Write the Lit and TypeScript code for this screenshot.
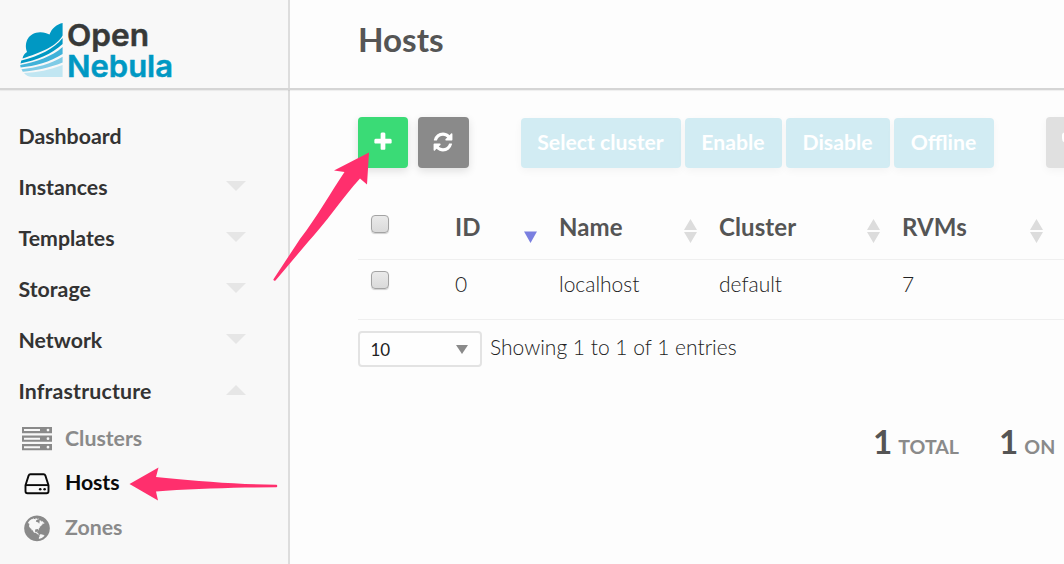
import { LitElement, html, css, svg } from "lit";
import { customElement, property } from "lit/decorators.js";

const PLUS = "M1600 736v192q0 40-28 68t-68 28h-416v416q0 40-28 68t-68 28h-192q-40 0-68-28t-28-68v-416h-416q-40 0-68-28t-28-68v-192q0-40 28-68t68-28h416v-416q0-40 28-68t68-28h192q40 0 68 28t28 68v416h416q40 0 68 28t28 68z";
const REFRESH = "M1639 1056q0 5-1 7-64 268-268 434.5t-478 166.5q-146 0-282.5-55t-243.5-157l-129 129q-19 19-45 19t-45-19-19-45v-448q0-26 19-45t45-19h448q26 0 45 19t19 45-19 45l-137 137q71 66 161 102t187 36q134 0 250-65t186-179q11-17 53-117 8-23 30-23h192q13 0 22.5 9.5t9.5 22.5zm25-800v448q0 26-19 45t-45 19h-448q-26 0-45-19t-19-45 19-45l138-138q-148-137-349-137-134 0-250 65t-186 179q-11 17-53 117-8 23-30 23h-199q-13 0-22.5-9.5t-9.5-22.5v-7q65-268 270-434.5t480-166.5q146 0 284 55.5t245 156.5l130-129q19-19 45-19t45 19 19 45z";
const GLOBE = "M896 128q209 0 385.5 103t279.5 279.5 103 385.5-103 385.5-279.5 279.5-385.5 103-385.5-103-279.5-279.5-103-385.5 103-385.5 279.5-279.5 385.5-103zm274 521q-2 1-9.5 9.5t-13.5 9.5q2 0 4.5-5t5-11 3.5-7q6-7 22-15 14-6 52-12 34-8 51 11-2-2 9.5-13t14.5-12q3-2 15-4.5t15-7.5l2-22q-12 1-17.5-7t-6.5-21q0 2-6 8 0-7-4.5-8t-11.5 1-9 1q-10-3-15-7.5t-8-16.5-4-15q-2-5-9.5-11t-9.5-10q-1-2-2.5-5.5t-3-6.5-4-5.5-5.5-2.5-7 5-7.5 10-4.5 5q-3-2-6-1.5t-4.5 1-4.5 3-5 3.5q-3 2-8.5 3t-8.5 2q15-5-1-11-10-4-16-3 9-4 7.5-12t-8.5-14h5q-1-4-8.5-8.5t-17.5-8.5-13-6q-8-5-34-9.5t-33-.5q-5 6-4.5 10.5t4 14 3.5 12.5q1 6-5.5 13t-6.5 12q0 7 14 15.5t10 21.5q-3 8-16 16t-16 12q-5 8-1.5 18.5t10.5 16.5q2 2 1.5 4t-3.5 4.5-5.5 4-6.5 3.5l-3 2q-11 5-20.5-6t-13.5-26q-7-25-16-30-23-8-29 1-5-13-41-26-25-9-58-4 6-1 0-15-7-15-19-12 3-6 4-17.5t1-13.5q3-13 12-23 1-1 7-8.5t9.5-13.5.5-6q35 4 50-11 5-5 11.5-17t10.5-17q9-6 14-5.5t14.5 5.5 14.5 5q14 1 15.5-11t-7.5-20q12 1 3-17-4-7-8-9-12-4-27 5-8 4 2 8-1-1-9.5 10.5t-16.5 17.5-16-5q-1-1-5.5-13.5t-9.5-13.5q-8 0-16 15 3-8-11-15t-24-8q19-12-8-27-7-4-20.5-5t-19.5 4q-5 7-5.5 11.5t5 8 10.5 5.5 11.5 4 8.5 3q14 10 8 14-2 1-8.5 3.5t-11.5 4.5-6 4q-3 4 0 14t-2 14q-5-5-9-17.5t-7-16.5q7 9-25 6l-10-1q-4 0-16 2t-20.5 1-13.5-8q-4-8 0-20 1-4 4-2-4-3-11-9.5t-10-8.5q-46 15-94 41 6 1 12-1 5-2 13-6.5t10-5.5q34-14 42-7l5-5q14 16 20 25-7-4-30-1-20 6-22 12 7 12 5 18-4-3-11.5-10t-14.5-11-15-5q-16 0-22 1-146 80-235 222 7 7 12 8 4 1 5 9t2.5 11 11.5-3q9 8 3 19 1-1 44 27 19 17 21 21 3 11-10 18-1-2-9-9t-9-4q-3 5 .5 18.5t10.5 12.5q-7 0-9.5 16t-2.5 35.5-1 23.5l2 1q-3 12 5.5 34.5t21.5 19.5q-13 3 20 43 6 8 8 9 3 2 12 7.5t15 10 10 10.5q4 5 10 22.5t14 23.5q-2 6 9.5 20t10.5 23q-1 0-2.5 1t-2.5 1q3 7 15.5 14t15.5 13q1 3 2 10t3 11 8 2q2-20-24-62-15-25-17-29-3-5-5.5-15.5t-4.5-14.5q2 0 6 1.5t8.5 3.5 7.5 4 2 3q-3 7 2 17.5t12 18.5 17 19 12 13q6 6 14 19.5t0 13.5q9 0 20 10.5t17 19.5q5 8 8 26t5 24q2 7 8.5 13.5t12.5 9.5l16 8 13 7q5 2 18.5 10.5t21.5 11.5q10 4 16 4t14.5-2.5 13.5-3.5q15-2 29 15t21 21q36 19 55 11-2 1 .5 7.5t8 15.5 9 14.5 5.5 8.5q5 6 18 15t18 15q6-4 7-9-3 8 7 20t18 10q14-3 14-32-31 15-49-18 0-1-2.5-5.5t-4-8.5-2.5-8.5 0-7.5 5-3q9 0 10-3.5t-2-12.5-4-13q-1-8-11-20t-12-15q-5 9-16 8t-16-9q0 1-1.5 5.5t-1.5 6.5q-13 0-15-1 1-3 2.5-17.5t3.5-22.5q1-4 5.5-12t7.5-14.5 4-12.5-4.5-9.5-17.5-2.5q-19 1-26 20-1 3-3 10.5t-5 11.5-9 7q-7 3-24 2t-24-5q-13-8-22.5-29t-9.5-37q0-10 2.5-26.5t3-25-5.5-24.5q3-2 9-9.5t10-10.5q2-1 4.5-1.5t4.5 0 4-1.5 3-6q-1-1-4-3-3-3-4-3 7 3 28.5-1.5t27.5 1.5q15 11 22-2 0-1-2.5-9.5t-.5-13.5q5 27 29 9 3 3 15.5 5t17.5 5q3 2 7 5.5t5.5 4.5 5-.5 8.5-6.5q10 14 12 24 11 40 19 44 7 3 11 2t4.5-9.5 0-14-1.5-12.5l-1-8v-18l-1-8q-15-3-18.5-12t1.5-18.5 15-18.5q1-1 8-3.5t15.5-6.5 12.5-8q21-19 15-35 7 0 11-9-1 0-5-3t-7.5-5-4.5-2q9-5 2-16 5-3 7.5-11t7.5-10q9 12 21 2 8-8 1-16 5-7 20.5-10.5t18.5-9.5q7 2 8-2t1-12 3-12q4-5 15-9t13-5l17-11q3-4 0-4 18 2 31-11 10-11-6-20 3-6-3-9.5t-15-5.5q3-1 11.5-.5t10.5-1.5q15-10-7-16-17-5-43 12zm-163 877q206-36 351-189-3-3-12.5-4.5t-12.5-3.5q-18-7-24-8 1-7-2.5-13t-8-9-12.5-8-11-7q-2-2-7-6t-7-5.5-7.5-4.5-8.5-2-10 1l-3 1q-3 1-5.5 2.5t-5.5 3-4 3 0 2.5q-21-17-36-22-5-1-11-5.5t-10.5-7-10-1.5-11.5 7q-5 5-6 15t-2 13q-7-5 0-17.5t2-18.5q-3-6-10.5-4.5t-12 4.5-11.5 8.5-9 6.5-8.5 5.5-8.5 7.5q-3 4-6 12t-5 11q-2-4-11.5-6.5t-9.5-5.5q2 10 4 35t5 38q7 31-12 48-27 25-29 40-4 22 12 26 0 7-8 20.5t-7 21.5q0 6 2 16z";

const serverIcon = svg`
  <g fill="currentColor">
    ${[0, 8.6, 17.1].map((y) => svg`
      <path fill-rule="evenodd" transform="translate(0 ${y})"
        d="M0 0H30V6.2H0ZM2 2.1V4.1H18V2.1ZM24.6 3.1a1.4 1.4 0 1 0 2.8 0a1.4 1.4 0 1 0-2.8 0Z"/>`)}
  </g>`;

const hddIcon = svg`
  <g fill="none" stroke="currentColor" stroke-width="1.9" stroke-linejoin="round">
    <path d="M3.500 12.200 6.600 2.600Q7.100 1.300 8.400 1.300H21.600Q22.900 1.300 23.400 2.600L26.500 12.200V18.200Q26.500 20.200 24.500 20.200H5.500Q3.500 20.200 3.500 18.200Z"/>
    <path d="M3.500 12.100H26.500"/>
  </g>
  <circle cx="18.2" cy="16.2" r="1.3" fill="currentColor"/>
  <circle cx="22.6" cy="16.2" r="1.3" fill="currentColor"/>`;

@customElement("nebula-logo")
class NebulaLogo extends LitElement {
  static styles = css`
    :host { display: block; width: 154px; height: 58px; }
    .mark { display: block; overflow: visible; }
    .word { font: 600 30px Inter, "Liberation Sans", sans-serif; }
  `;
  render() {
    return html`
      <svg class="mark" width="154" height="58" viewBox="0 0 154 58">
        <path fill="#0098c3" d="M42.600 1V13.500C37 24 20 31 2.500 36.500C3 33.500 4.500 31.500 7 30C3.500 20 9 10.500 20 10.300C24 10.200 27 11.300 29.500 12.600C31.500 6.500 37 2 42.600 1Z"/>
        <path fill="#0098c3" d="M42.600 16V22C32 32 17 38 0.500 41.500L1.300 38.500C19 34 34 27 42.600 16Z"/>
        <path fill="#40b2d9" d="M42.600 25V32C30 40 15 44 0.600 45.500L0.200 43C16 40 32 34.500 42.600 25Z"/>
        <path fill="#7fcbe6" d="M42.600 34.800V40.500C29 46 16 48.500 2.800 49.700L1.400 47.200C16 46 31 42 42.600 34.800Z"/>
        <path fill="#c1e6f2" d="M42.600 43V55H13C9 55 6 53.500 4 51C17 50.500 30 48 42.600 43Z"/>
        <text class="word" x="47" y="24" fill="#373938" stroke="#373938" stroke-width=".5" textLength="82" lengthAdjust="spacingAndGlyphs">Open</text>
        <text class="word" x="47" y="54.500" fill="#0098c3" stroke="#0098c3" stroke-width=".5" textLength="106" lengthAdjust="spacingAndGlyphs">Nebula</text>
      </svg>`;
  }
}

@customElement("side-nav")
class SideNav extends LitElement {
  static styles = css`
    :host { display: block; }
    .nav { display: flex; flex-direction: column; padding: 19px 42px 0 18.500px; }
    .item { display: flex; align-items: center; justify-content: space-between; height: 51px;
      font-weight: 700; font-size: 21.3px; color: #333; }
    .item.wide { letter-spacing: .17px; }
    .caret { width: 0; height: 0; border: 10px solid transparent; border-bottom-width: 0;
      border-top-color: #e6e6e6; margin-top: -2px; }
    .caret.up { border-top-width: 0; border-bottom: 10px solid #e6e6e6; }
    .sub { display: flex; align-items: center; gap: 13px; height: 44.500px; padding-left: 3.500px;
      font-weight: 700; font-size: 21.3px; color: #8a8a8a; }
    .sub.active { color: #0a0a0a; }
    .active .label { padding-bottom: 2px; letter-spacing: -.1px; }
    .icon { display: block; width: 30px; height: 30px; flex: none; }
  `;
  render() {
    const sections = ["Instances", "Templates", "Storage", "Network"];
    return html`
      <nav class="nav">
        <div class="item">Dashboard</div>
        ${sections.map((s) => html`<div class="item">${s}<span class="caret"></span></div>`)}
        <div class="item wide">Infrastructure<span class="caret up"></span></div>
        <div class="sub"><svg class="icon" viewBox="0 -4 30 30">${serverIcon}</svg><span class="label">Clusters</span></div>
        <div class="sub active"><svg class="icon" viewBox="0 -5 30 30">${hddIcon}</svg><span class="label">Hosts</span></div>
        <div class="sub"><svg class="icon" viewBox="0 -80 1792 1792"><path fill="currentColor" d=${GLOBE}></path></svg><span class="label">Zones</span></div>
      </nav>`;
  }
}

@customElement("sort-mark")
class SortMark extends LitElement {
  static styles = css`
    :host { display: block; width: 14px; height: 24px; }
    svg { display: block; }
  `;
  @property() order = "both";
  render() {
    return html`
      <svg width="14" height="24" viewBox="0 0 14 24">
        ${this.order === "desc"
          ? svg`<path fill="#7a7fe0" d="M0 12.500H13L6.500 24Z"/>`
          : svg`<path fill="#dcdcdc" d="M0 11H13L6.500 0ZM0 13H13L6.500 24Z"/>`}
      </svg>`;
  }
}

@customElement("host-table")
class HostTable extends LitElement {
  static styles = css`
    :host { display: block; }
    .row { display: grid; grid-template-columns: 85px 104px 160px 183px 163px 1fr;
      border-bottom: 1px solid #efefef; color: #222; font-size: 21px; font-weight: 300; height: 59px; }
    .row.head { height: 66px; font-weight: 700; font-size: 24px; color: #555; }
    .cell { display: flex; justify-content: space-between; padding: 0 9px 0 12px; }
    .text { line-height: 30px; padding-top: 9px; }
    .head .text { padding-top: 19px; letter-spacing: .1px; }
    .head sort-mark { margin-top: 26px; }
    .check { box-sizing: border-box; width: 18px; height: 18px; margin-top: 11px; margin-left: 1px; border: 1.500px solid #a3a3a3;
      border-radius: 4px; background: linear-gradient(#eaeaea, #dadada); box-shadow: 0 1px 1px rgba(0,0,0,.18); }
    .head .check { margin-top: 22px; }
  `;
  render() {
    return html`
      <div class="row head">
        <div class="cell"><span class="check"></span></div>
        <div class="cell"><span class="text">ID</span><sort-mark order="desc"></sort-mark></div>
        ${["Name", "Cluster", "RVMs"].map((n) => html`
          <div class="cell"><span class="text">${n}</span><sort-mark></sort-mark></div>`)}
      </div>
      <div class="row">
        <div class="cell"><span class="check"></span></div>
        ${["0", "localhost", "default", "7"].map((n) => html`
          <div class="cell"><span class="text">${n}</span></div>`)}
      </div>`;
  }
}

@customElement("app-root")
class AppRoot extends LitElement {
  static styles = css`
    :host { display: block; position: relative; width: 1064px; height: 564px; overflow: hidden;
      font-family: Lato, "Liberation Sans", sans-serif; background: #fdfdfd; }
    .page { display: grid; grid-template: 88px 1fr / 288px 1fr; height: 564px; }
    .brand { box-sizing: border-box; background: #f8f8f8; border-right: 2px solid #ddd; width: 290px; padding: 22px 0 0 20px; }
    .title { display: flex; align-items: center; padding: 0 0 10px 70px; font-size: 33.2px; font-weight: 700; color: #555; }
    .side { box-sizing: border-box; width: 290px; background: #f8f8f8; border-right: 2px solid #ddd; padding-top: 3px; }
    .main { padding: 29px 0 0 70px; min-width: 0; }
    .rule { position: absolute; left: 0; right: 0; top: 88px; height: 2px; background: #d5d5d5; box-shadow: 0 1px 1px rgba(0,0,0,.06); }
    .bar { display: flex; align-items: flex-end; height: 51px; width: 760px; }
    .btn { box-sizing: border-box; flex: none; display: flex; align-items: center; justify-content: center; height: 50px;
      border-radius: 4px; color: #fff; font-size: 21.2px; font-weight: 700; padding-bottom: 2px; box-shadow: 0 3px 8px rgba(0,0,0,.12); }
    .add { width: 50px; height: 51px; background: #3adb76; margin-right: 10px; }
    .reload { width: 51px; height: 51px; background: #8a8a8a; margin-right: 52px; padding-right: 1px; }
    .group { display: flex; gap: 4px; margin-right: 52px; }
    .soft { background: #d2ecf3; box-shadow: 0 3px 8px rgba(0,0,0,.04); padding-right: 1px; }
    .w160 { width: 160px; } .w97 { width: 97px; } .w104 { width: 104px; } .w100 { width: 100px; }
    .more { width: 80px; height: 51px; background: #e0e0e0; justify-content: flex-start; padding-left: 16px; box-shadow: 0 3px 8px rgba(0,0,0,.04); }
    .foot { display: flex; align-items: center; gap: 8px; padding-top: 11px; font-size: 21px; font-weight: 300; color: #222; }
    .select { box-sizing: border-box; width: 124px; height: 36px; border: 2px solid #e3e3e3; border-radius: 4px; background: #fefefe;
      display: flex; align-items: center; justify-content: space-between; padding: 0 12px 0 10.500px; font-size: 17px; font-weight: 400; color: #222; }
    .drop { width: 0; height: 0; border: 6px solid transparent; border-top: 9px solid #8a8a8a; border-bottom: 0; }
    .info { margin-top: -5px; }
    .totals { display: flex; gap: 40px; padding: 54px 0 0 515px; white-space: nowrap; }
    .total { display: flex; align-items: baseline; gap: 6px; color: #8a8a8a; font-size: 19.6px; font-weight: 700; }
    .num { font-size: 33.2px; font-weight: 700; color: #555; }
    .table { padding-top: 25px; }
    .arrows { position: absolute; left: 0; top: 0; pointer-events: none; }
  `;
  render() {
    return html`
      <div class="page">
        <div class="brand"><nebula-logo></nebula-logo></div>
        <div class="title">Hosts</div>
        <div class="side"><side-nav></side-nav></div>
        <div class="main">
          <div class="bar">
            <div class="btn add"><svg width="22" height="22" viewBox="0 0 1792 1792"><path fill="#fff" d=${PLUS}></path></svg></div>
            <div class="btn reload"><svg width="22" height="22" viewBox="0 0 1792 1792"><path fill="#fff" d=${REFRESH}></path></svg></div>
            <div class="group">
              <div class="btn soft w160">Select cluster</div>
              <div class="btn soft w97">Enable</div>
              <div class="btn soft w104">Disable</div>
              <div class="btn soft w100">Offline</div>
            </div>
            <div class="btn more"><svg width="18" height="20" viewBox="0 0 18 20"><path fill="#fff" d="M2 0.500H9V10.500H3Q0 10 0 6V3Q0 1 2 0.500Z"/></svg></div>
          </div>
          <div class="table"><host-table></host-table></div>
          <div class="foot">
            <div class="select">10<span class="drop"></span></div>
            <span class="info">Showing 1 to 1 of 1 entries</span>
          </div>
          <div class="totals">
            <div class="total"><span class="num">1</span>TOTAL</div>
            <div class="total"><span class="num">1</span>ON</div>
          </div>
        </div>
      </div>
      <div class="rule"></div>
      <svg class="arrows" width="1064" height="564" viewBox="0 0 1064 564">
        <g fill="#ff2f6d">
          <path d="M369 152.500 367 184.500 360 178.500C343 197 325 224 308 242L275.500 280.500Q274 281.500 273.300 279.500L300 239C317 217 331 192 344.500 172L334 170.500Z"/>
          <path d="M129.500 484 158.500 467.500 156 477C182 479.500 215 482.500 245 484L276.500 484.800Q278 486 276.500 487.300L245 487.500C215 488.500 182 489 156 491.500L158 500.500Z"/>
        </g>
      </svg>`;
  }
}
